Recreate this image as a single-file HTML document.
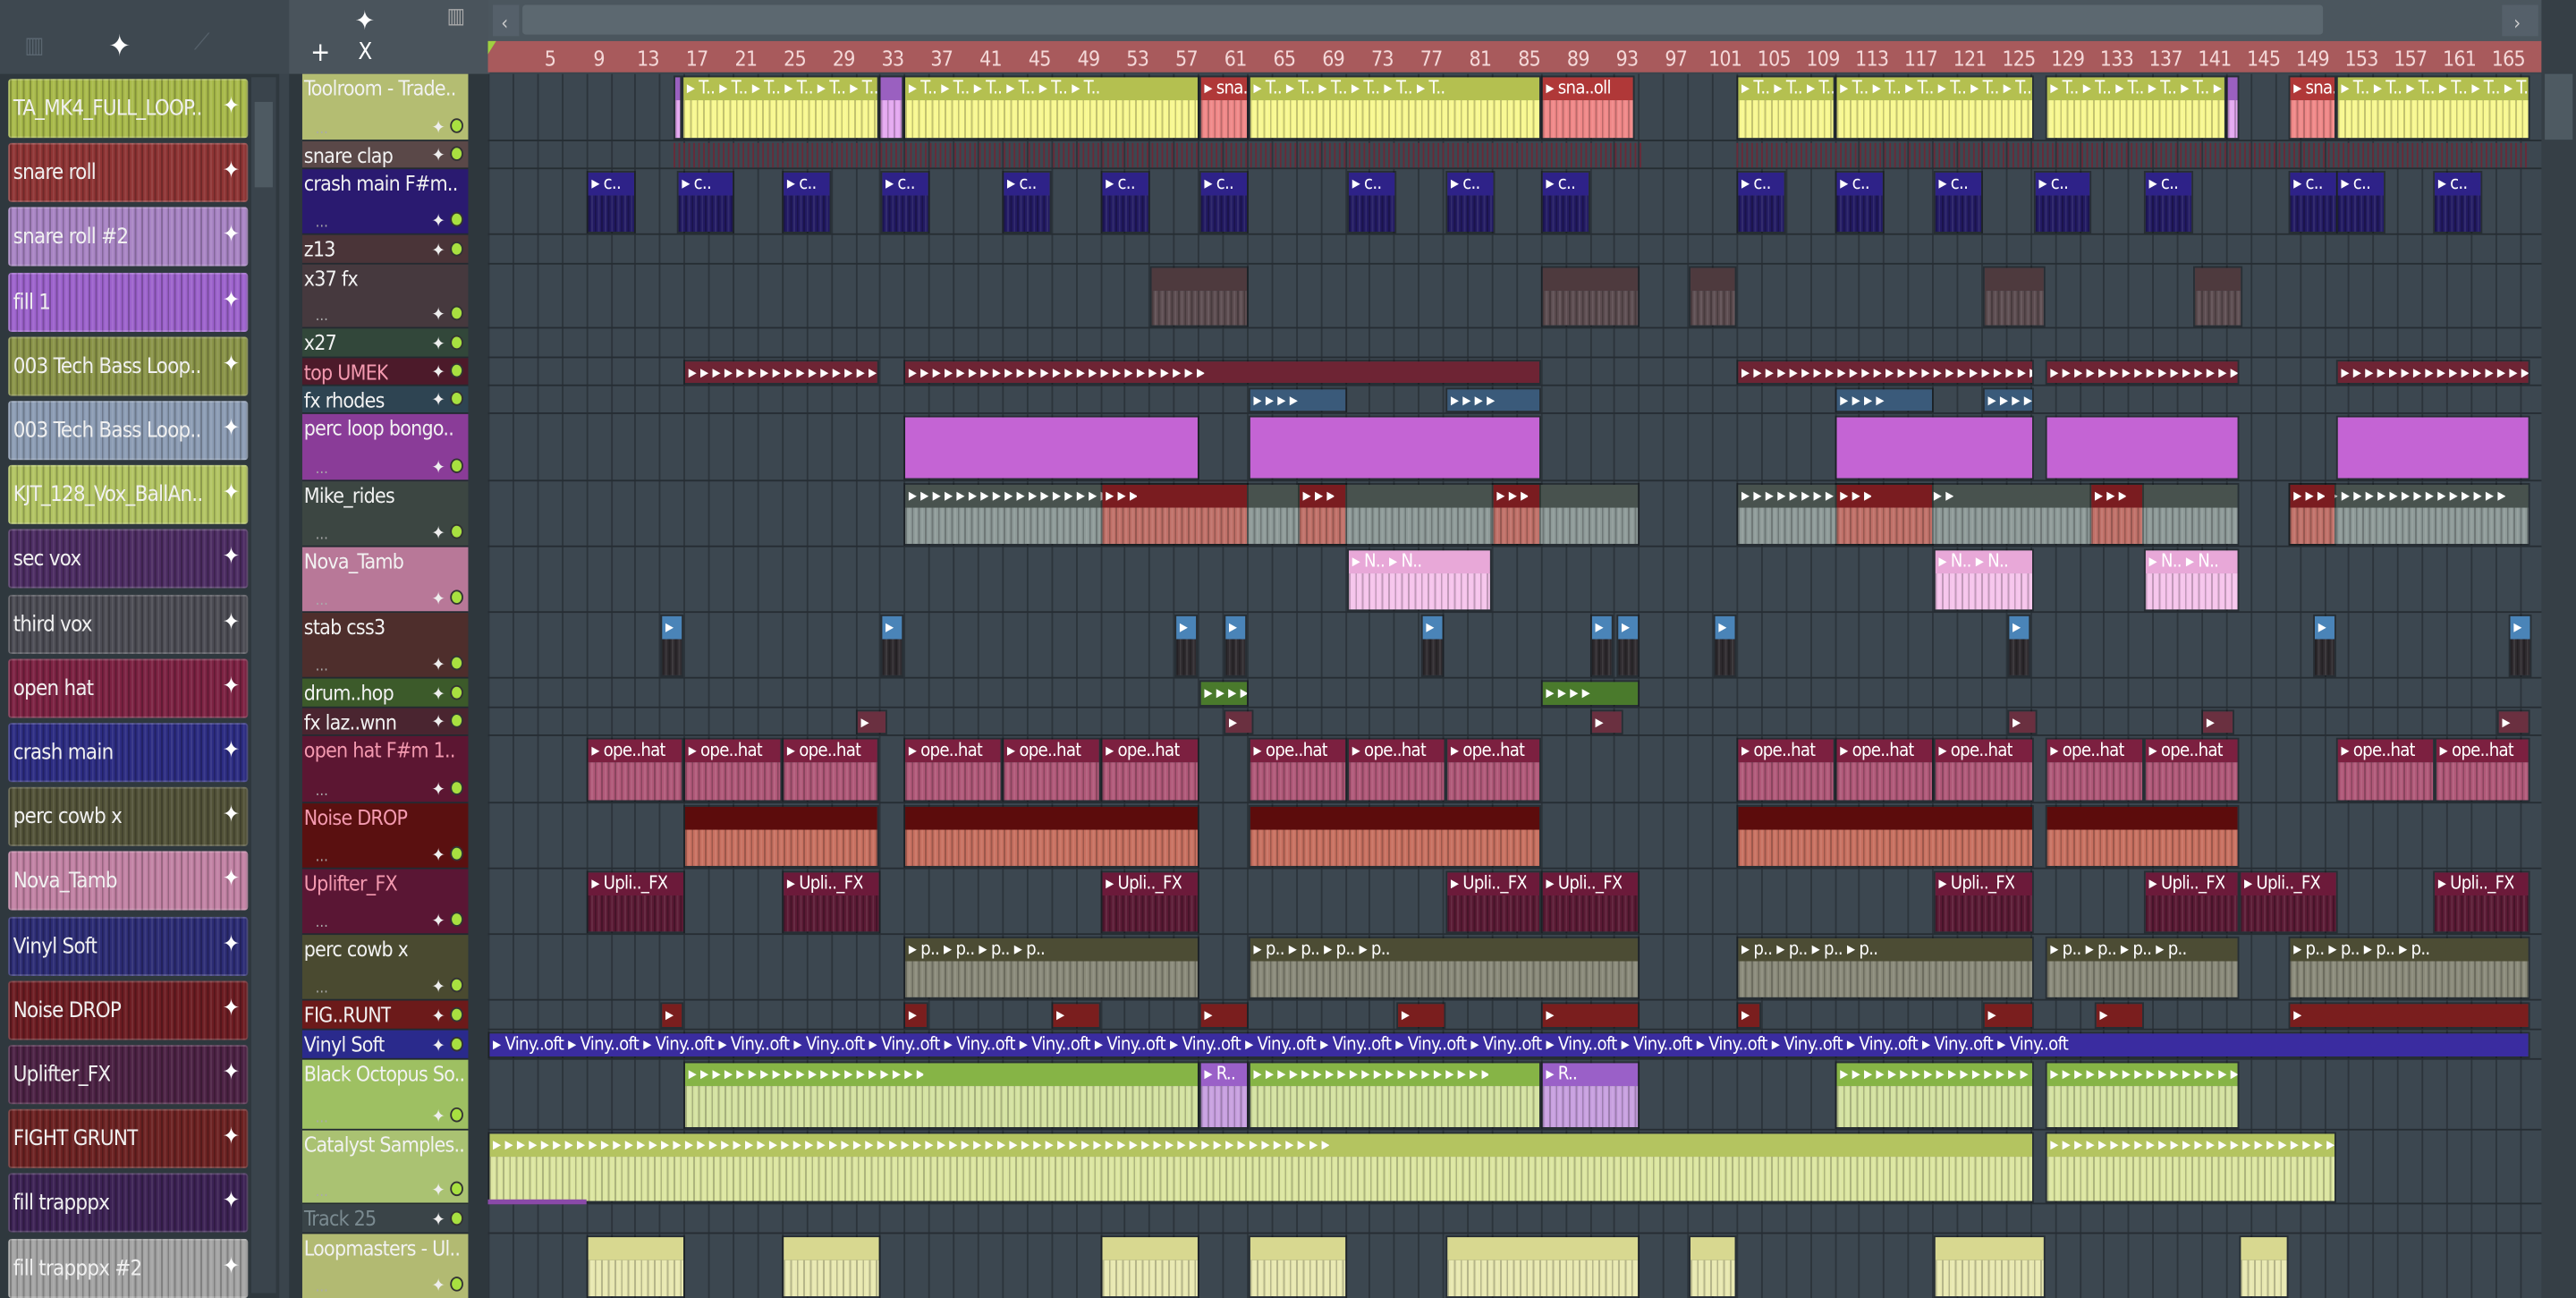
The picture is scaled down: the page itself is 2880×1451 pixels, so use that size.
<!DOCTYPE html>
<html><head><meta charset="utf-8">
<style>
html,body{margin:0;padding:0;background:#3a444c;overflow:hidden;width:2880px;height:1450px}
#w{position:absolute;left:0;top:0;width:1568px;height:790px;transform:scale(1.83673);transform-origin:0 0;background:#3a444c;font-family:"DejaVu Sans Condensed","Liberation Sans",sans-serif;overflow:hidden}
.a{position:absolute;box-sizing:border-box;overflow:hidden;white-space:nowrap}
.t{color:#f0f0f0;font-size:12.5px;letter-spacing:-0.4px}
.wv{background-image:repeating-linear-gradient(90deg,rgba(0,0,0,.22) 0 1px,transparent 1px 2px,rgba(255,255,255,.08) 2px 3px,transparent 3px 4px)}
</style></head><body><div id="w"></div>
<script>
var W=document.getElementById('w'),h='';
function r(x,y,w,hh,bg,extra,inner,cls){h+='<div class="a '+(cls||'')+'" style="left:'+x+'px;top:'+y+'px;width:'+w+'px;height:'+hh+'px;background-color:'+bg+';'+(extra||'')+'">'+(inner||'')+'</div>';}
r(0,0,176,45,'#3e4850');r(176,0,122,45,'#4a545c');r(297,0,1271,25,'#4b565e');
r(318,3,1096,18,'#5c6870','border-radius:2px');
r(1523,3,22,19,'#55606a','','<span style="color:#ccc;font-size:12px;padding-left:7px">›</span>');
r(300,3,16,19,'#55606a','','<span style="color:#ccc;font-size:12px;padding-left:5px">‹</span>');
h+='<div class="a" style="left:66px;top:18px;color:#fff;font-size:18px">✦</div><div class="a" style="left:15px;top:20px;color:#5a6670;font-size:14px">▥</div><div class="a" style="left:118px;top:18px;color:#55606a;font-size:14px">⟋</div>';
h+='<div class="a" style="left:189px;top:22px;color:#fff;font-size:16px">+</div><div class="a" style="left:218px;top:24px;color:#fff;font-size:14px">X</div><div class="a" style="left:216px;top:3px;color:#fff;font-size:16px">✦</div><div class="a" style="left:272px;top:3px;color:#aaa;font-size:13px">▥</div>';
r(297,25,1250,19,'#a85a5c');
for(var b=5;b<=165;b+=4){var x=300+(b-1)*7.45;h+='<div class="a t" style="left:'+(x-6)+'px;top:28px;width:22px;text-align:center;color:#f4d8d8">'+b+'</div>';}
h+='<div class="a" style="left:297px;top:25px;width:0;height:0;border-left:5px solid #a0d040;border-right:5px solid transparent;border-bottom:8px solid transparent"></div>';
r(0,45,170,745,'#2f383e');r(153,47,15,740,'#3a444c');r(155,62,11,52,'#4e5a62');
var L=[['TA_MK4_FULL_LOOP..','#a8ba4a'],['snare roll','#8e3434'],['snare roll  #2','#a884c4'],['fill 1','#9c62cc'],['003 Tech Bass Loop..','#8a9448'],['003 Tech Bass Loop..','#8c9cb4'],['KJT_128_Vox_BallAn..','#b2c462'],['sec vox','#4c2c62'],['third vox','#4c4c54'],['open hat','#7c2242'],['crash main','#2c2c82'],['perc cowb x','#525238'],['Nova_Tamb','#c282a4'],['Vinyl Soft','#2c2c74'],['Noise DROP','#6c1c22'],['Uplifter_FX','#4c2244'],['FIGHT GRUNT','#6c2222'],['fill trapppx','#3c2254'],['fill trapppx  #2','#a4a4a4']];
L.forEach(function(l,i){r(5,48+i*39.2,146,36,l[1],'border-radius:2px;border:1px solid rgba(255,255,255,.18)','<span class="a t" style="left:2px;top:10px;font-size:13px">'+l[0]+'</span><span class="a" style="right:4px;top:8px;color:#fff;font-size:14px">✦</span>','wv');});
var T=[['Toolroom - Trade..',45,41,'#b4bd72',1],['snare clap',86,17,'#5a4848'],['crash main F#m..',103,40,'#2a1a70',1],['z13',143,18,'#4a3438'],['x37 fx',161,39,'#46393e',1],['x27',200,18,'#32473a'],['top UMEK',218,17,'#4c1a2a'],['fx rhodes',235,17,'#2e4452'],['perc loop bongo..',252,41,'#8a3c98',1],[' Mike_rides',293,40,'#3c4642',1],['Nova_Tamb',333,40,'#b87898',1],['stab css3',373,40,'#4e2e2c',1],['drum..hop',413,18,'#3c5a2a'],['fx laz..wnn',431,17,'#4a2530'],['open hat F#m 1..',448,41,'#5c1632',1],['Noise DROP',489,40,'#5a1010',1],['Uplifter_FX',529,40,'#5a1634',1],['perc cowb x',569,40,'#4a4a30',1],['FIG..RUNT',609,18,'#6c1a1a'],['Vinyl Soft',627,18,'#2a2a8c'],['Black Octopus So..',645,43,'#9ec062',1],['Catalyst Samples..',688,45,'#aac272',1],['Track 25',733,18,'#3a4448'],['Loopmasters - Ul..',751,40,'#b2ba72',1]];
r(176,45,121,745,'#2e373d');
r(297,45,1250,745,'#3c4750');
for(var g=0;g<84;g++){r(297+g*14.9,45,1,745,'#2c343b');}
r(1547,0,21,790,'#363f46');r(1549,45,17,40,'#4e5a62');
T.forEach(function(t){var c=t[0]=='Track 25'?'#7a8a90':(t[0].indexOf('top')==0||t[0].indexOf('open')==0||t[0].indexOf('Upl')==0||t[0].indexOf('Noise')==0?'#f49ab0':'#f2f2f2');
 r(184,t[1],101,t[2],t[3],'border-bottom:1px solid #232a30','<span class="a t" style="left:1px;top:1px;color:'+c+'">'+t[0]+'</span><span class="a" style="right:14px;top:'+(t[2]-15)+'px;color:#eee;font-size:11px">✦</span><span class="a" style="right:3px;top:'+(t[2]-14)+'px;width:8px;height:9px;border-radius:50%;background:#a8e040;border:1px solid #333"></span>'+(t[4]?'<span class="a" style="left:8px;top:'+(t[2]-12)+'px;color:#aaa;font-size:9px">...</span>':''));
 r(297,t[1]+t[2]-1,1250,1,'#262d33');});
function C(tr,list,hc,bc,lab,split){var t=T[tr];list.forEach(function(p){var y=t[1]+1,hh=t[2]-2;var hd=split?Math.min(14,hh):hh;
 var inner='<span class="a" style="left:0;top:0;width:100%;height:'+hd+'px;background:'+hc+'"></span>'+(split?'<span class="a wv" style="left:0;top:'+hd+'px;width:100%;bottom:0;background-color:'+bc+'"></span>':'')+'<span class="a t" style="left:2px;top:0;font-size:11px;color:#fff">'+(lab||'')+'</span>';
 r(p[0],y,p[1]-p[0],hh,'transparent','border:1px solid rgba(0,0,0,.35)',inner);});}
C(0,[[410,415],[535,550],[1355,1363]],'#9a60c0','#e4a8f0','',1);
C(0,[[415,535],[550,730],[760,938],[1057,1117],[1117,1238],[1245,1355],[1422,1540]],'#b4c050','#f8f890','▸ T.. ▸ T.. ▸ T.. ▸ T.. ▸ T.. ▸ T..',1);
C(0,[[730,760],[938,995],[1393,1422]],'#b03838','#f08888','▸ sna..oll',1);
for(var k=410;k<1000;k+=3)r(k,87,1,15,'#6a2a38');for(var k=1057;k<1540;k+=3)r(k,87,1,15,'#6a2a38');
C(2,[[357,387],[412,447],[476,506],[536,566],[610,640],[670,700],[730,760],[820,850],[880,910],[938,968],[1057,1087],[1117,1147],[1177,1207],[1238,1273],[1305,1335],[1393,1423],[1422,1452],[1481,1511]],'#2e2288','#221a62','▸ c..',1);
C(4,[[700,760],[938,998],[1028,1057],[1207,1245],[1335,1365]],'#4e3a3e','#5c4c50','',1);
C(6,[[416,535],[550,938],[1057,1238],[1245,1363],[1422,1540]],'#6e2434','#6e2434','▸ ▸ ▸ ▸ ▸ ▸ ▸ ▸ ▸ ▸ ▸ ▸ ▸ ▸ ▸ ▸ ▸ ▸ ▸ ▸ ▸ ▸ ▸ ▸ ▸');
C(7,[[760,820],[880,938],[1117,1177],[1207,1238]],'#3a5a7a','#3a5a7a','▸ ▸ ▸ ▸');
C(8,[[550,730],[760,938],[1117,1238],[1245,1363],[1422,1540]],'#c464d4','#c464d4','',0);
C(9,[[550,998],[1057,1363],[1393,1540]],'#48524e','#8e9a98','▸ ▸ ▸ ▸ ▸ ▸ ▸ ▸ ▸ ▸ ▸ ▸ ▸ ▸ ▸ ▸ ▸ ▸',1);
C(9,[[670,760],[790,820],[908,938],[1117,1177],[1272,1305],[1393,1422]],'#7a1c20','#c07068','▸ ▸ ▸',1);
C(10,[[820,908],[1177,1238],[1305,1363]],'#e8a8d8','#f6c4ec','▸ N.. ▸ N..',1);
C(11,[[402,416],[536,550],[715,729],[745,759],[865,879],[968,982],[984,998],[1043,1057],[1222,1236],[1408,1422],[1527,1541]],'#4a84b8','#2e2a2e','▸',1);
C(12,[[730,760],[938,998]],'#4a7a2c','#4a7a2c','▸ ▸ ▸ ▸');
C(13,[[521,540],[745,763],[968,988],[1222,1240],[1340,1360],[1520,1540]],'#6a3040','#6a3040','▸');
C(14,[[357,416],[416,476],[476,535],[550,610],[610,670],[670,730],[760,820],[820,880],[880,938],[1057,1117],[1117,1177],[1177,1238],[1245,1305],[1305,1363],[1422,1482],[1482,1540]],'#7c2040','#b05878','▸ ope..hat',1);
C(15,[[416,535],[550,730],[760,938],[1057,1238],[1245,1363]],'#5c0c0c','#c87060','',1);
C(16,[[357,417],[476,536],[670,730],[880,938],[938,998],[1177,1238],[1305,1363],[1363,1423],[1481,1540]],'#6c1a3a','#5a1a34','▸ Upli.._FX',1);
C(17,[[550,730],[760,998],[1057,1238],[1245,1363],[1393,1540]],'#4c4c34','#8a8a7a','▸ p.. ▸ p.. ▸ p.. ▸ p..',1);
C(18,[[402,416],[550,565],[640,670],[730,760],[850,880],[938,998],[1057,1072],[1207,1238],[1275,1305],[1393,1540]],'#7a1e1e','#7a1e1e','▸');
C(19,[[297,1540]],'#3a2ca0','#3a2ca0','▸ Viny..oft ▸ Viny..oft ▸ Viny..oft ▸ Viny..oft ▸ Viny..oft ▸ Viny..oft ▸ Viny..oft ▸ Viny..oft ▸ Viny..oft ▸ Viny..oft ▸ Viny..oft ▸ Viny..oft ▸ Viny..oft ▸ Viny..oft ▸ Viny..oft ▸ Viny..oft ▸ Viny..oft ▸ Viny..oft ▸ Viny..oft ▸ Viny..oft ▸ Viny..oft');
C(20,[[416,730],[760,938],[1117,1238],[1245,1363]],'#86b446','#d4e2a0','▸ ▸ ▸ ▸ ▸ ▸ ▸ ▸ ▸ ▸ ▸ ▸ ▸ ▸ ▸ ▸ ▸ ▸ ▸ ▸',1);
C(20,[[730,760],[938,998]],'#9a60c8','#c8a0e0','▸ R..',1);
C(21,[[297,1238],[1245,1422]],'#b4c460','#dce6a0','▸ ▸ ▸ ▸ ▸ ▸ ▸ ▸ ▸ ▸ ▸ ▸ ▸ ▸ ▸ ▸ ▸ ▸ ▸ ▸ ▸ ▸ ▸ ▸ ▸ ▸ ▸ ▸ ▸ ▸ ▸ ▸ ▸ ▸ ▸ ▸ ▸ ▸ ▸ ▸ ▸ ▸ ▸ ▸ ▸ ▸ ▸ ▸ ▸ ▸ ▸ ▸ ▸ ▸ ▸ ▸ ▸ ▸ ▸ ▸ ▸ ▸ ▸ ▸ ▸ ▸ ▸ ▸ ▸ ▸',1);
r(297,730,60,3,'#8a4aa8');
C(23,[[357,417],[476,536],[670,730],[760,820],[880,998],[1028,1057],[1177,1245],[1363,1393]],'#d8d890','#e8e8b0','',1);
W.innerHTML=h;
</script></body></html>
